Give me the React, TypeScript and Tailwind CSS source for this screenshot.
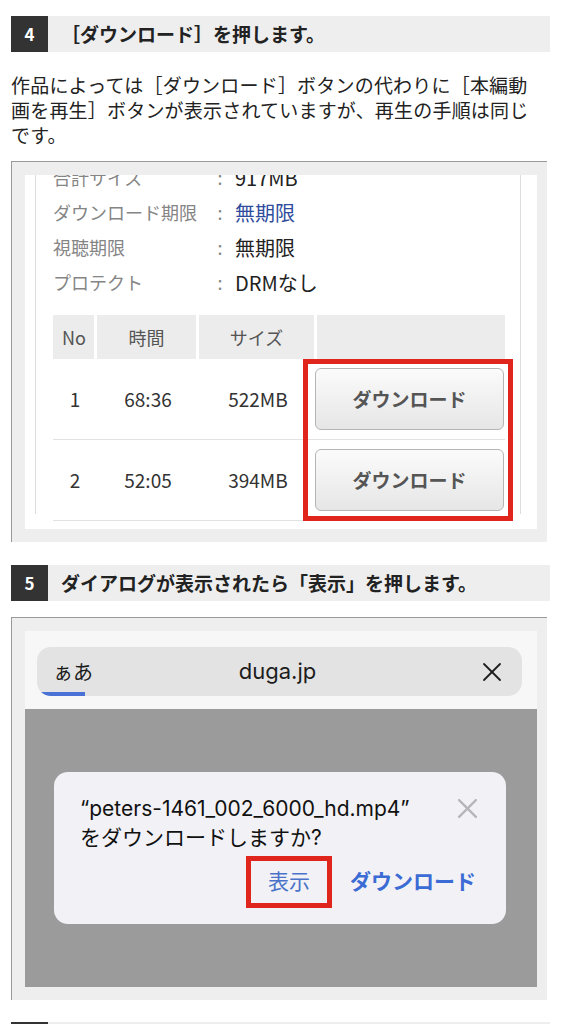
import type { ReactNode } from 'react';

const infoRows = [
    { label: '合計サイズ', value: '917MB' },
    { label: 'ダウンロード期限', value: '無期限', link: true },
    { label: '視聴期限', value: '無期限' },
    { label: 'プロテクト', value: 'DRMなし' },
];

const files = [
    { no: 1, time: '68:36', size: '522MB' },
    { no: 2, time: '52:05', size: '394MB' },
];

function StepHeader({ num, children }: { num: number; children?: ReactNode }) {
    return (
        <div className="flex h-9 bg-[#eeeeee]">
            <div className="flex w-[37px] items-center justify-center bg-[#333333] text-[17px] font-bold text-white">{num}</div>
            <h2 className="flex items-center pl-[13px] text-[19px] font-bold text-[#222222]">{children}</h2>
        </div>
    );
}

function CloseIcon({ className, width = 1.8 }: { className?: string; width?: number }) {
    return (
        <svg viewBox="0 0 20 20" className={className} fill="none" stroke="currentColor" strokeWidth={width} strokeLinecap="round">
            <line x1="2" y1="2" x2="18" y2="18" />
            <line x1="18" y1="2" x2="2" y2="18" />
        </svg>
    );
}

function DownloadPanel() {
    return (
        <div className="mr-[3px] mt-[14px] h-[381px] border-l border-t border-[#9a9a9a] bg-[#eeeeee] pb-[13px] pl-[13px] pr-[10px] pt-[13px]">
            <div className="h-[354px] overflow-hidden bg-white">
                <div className="ml-[10px] h-full w-[486px] border-x border-[#dddddd] pl-[17px] pr-[15px]">
                    <div className="-mt-[15px]">
                        {infoRows.map((row) => (
                            <div key={row.label} className="flex h-[35px] items-center">
                                <div className="w-[158px] text-[18px] text-[#858585]">{row.label}</div>
                                <div className="w-[18px] text-center text-[18px] text-[#858585]">:</div>
                                <div className={'pl-[6px] text-[20px] ' + (row.link ? 'text-[#2f4c9c]' : 'text-[#222222]')}>{row.value}</div>
                            </div>
                        ))}
                    </div>

                    <div className="mt-[15px] flex h-[44px] gap-[3px] text-[18px] text-[#555555]">
                        <div className="flex w-[41px] items-center bg-[#ececec] pl-[9px]">No</div>
                        <div className="flex w-[99px] items-center justify-center bg-[#ececec]">時間</div>
                        <div className="flex w-[115px] items-center justify-center bg-[#ececec]">サイズ</div>
                        <div className="flex-1 bg-[#ececec]" />
                    </div>

                    <div className="relative">
                        {files.map((f) => (
                            <div key={f.no} className="flex h-[81px] items-center border-b border-[#e2e2e2] text-[19px] text-[#333333]">
                                <div className="w-[44px] text-center">{f.no}</div>
                                <div className="w-[102px] text-center">{f.time}</div>
                                <div className="w-[118px] text-center">{f.size}</div>
                                <button className="ml-[-2px] h-[62px] w-[189px] rounded-[6px] border border-[#b5b5b5] bg-gradient-to-b from-[#fbfbfb] to-[#e6e6e6] text-[19px] font-bold text-[#555555]">
                                    ダウンロード
                                </button>
                            </div>
                        ))}
                        <div className="absolute left-[250px] top-0 h-[162px] w-[210px] border-[5px] border-[#e0261c]" />
                    </div>
                </div>
            </div>
        </div>
    );
}

function BrowserDialog() {
    return (
        <div className="mr-[3px] mt-[16px] h-[383px] border-l border-t border-[#9a9a9a] bg-[#eeeeee] pb-[13px] pl-[13px] pr-[10px] pt-[13px]">
            <div className="bg-[#f7f7f7] pb-[13px] pl-[12px] pr-[15px] pt-[16px]">
                <div className="relative flex h-[49px] items-center overflow-hidden rounded-[14px] bg-[#e3e3e3] pl-[16px] pr-[20px] text-[#1c1c1c]">
                    <span className="w-[80px] text-[20px]">ぁあ</span>
                    <span className="flex-1 text-center font-['Inter','Noto_Sans_CJK_JP',sans-serif] text-[22px]">duga.jp</span>
                    <span className="flex w-[80px] justify-end">
                        <CloseIcon className="h-[20px] w-[20px]" />
                    </span>
                    <div className="absolute bottom-0 left-0 h-[4px] w-[48px] bg-[#4a72d6]" />
                </div>
            </div>
            <div className="h-[278px] bg-[#9b9b9b] pl-[29px] pr-[31px] pt-[63px]">
                <div className="h-[152px] rounded-[14px] bg-[#f2f2f6] pl-[26px] pr-[28px] pt-[22px] font-['Inter','Noto_Sans_CJK_JP',sans-serif] text-[21px] text-[#111111]">
                    <div className="flex items-start justify-between">
                        <div className="leading-[29px]">
                            <div>“peters-1461_002_6000_hd.mp4”</div>
                            <div>をダウンロードしますか?</div>
                        </div>
                        <CloseIcon className="mt-[4px] h-[21px] w-[21px] text-[#b5b5ba]" width={2.2} />
                    </div>
                    <div className="mt-[4px] flex items-center justify-end gap-[18px] pr-[2px]">
                        <div className="flex h-[52px] w-[86px] items-center justify-center border-[5px] border-[#e0261c] text-[#4a72c8]">表示</div>
                        <div className="font-bold text-[#3b6bd4]">ダウンロード</div>
                    </div>
                </div>
            </div>
        </div>
    );
}

export default function App() {
    return (
        <div className="w-[561px] bg-white px-[11px] pb-10 pt-4 font-['Noto_Sans_CJK_JP',sans-serif] text-[#222222]">
            <StepHeader num={4}>［ダウンロード］を押します。</StepHeader>
            <p className="mt-[20px] w-[530px] text-[19px] leading-[25px] tracking-[0.2px]">
                作品によっては［ダウンロード］ボタンの代わりに［本編動画を再生］ボタンが表示されていますが、再生の手順は同じです。
            </p>
            <DownloadPanel />

            <div className="mt-[23px]">
                <StepHeader num={5}>ダイアログが表示されたら「表示」を押します。</StepHeader>
            </div>
            <BrowserDialog />

            <div className="mt-[22px]">
                <StepHeader num={6} />
            </div>
        </div>
    );
}
